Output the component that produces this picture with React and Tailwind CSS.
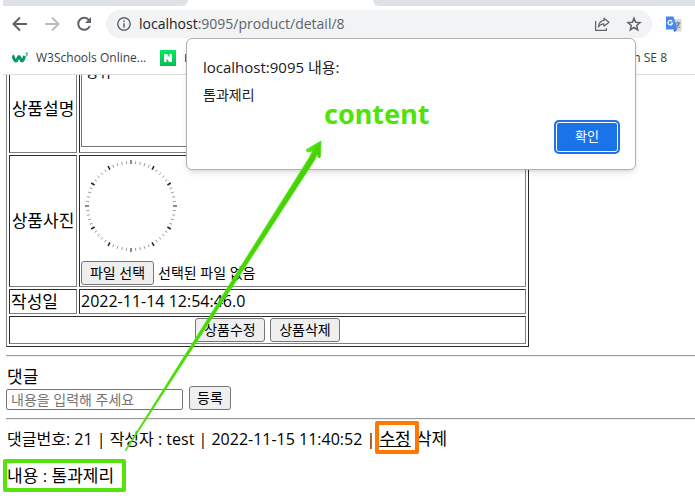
import React, { useState } from "react";

function BackIcon() {
  return (
    <svg width="16" height="16" viewBox="0 0 16 16" fill="none" stroke="currentColor" strokeWidth="2">
      <path d="M15 8H2M8 1.5 1.5 8 8 14.5" />
    </svg>
  );
}

function ForwardIcon() {
  return (
    <svg width="16" height="16" viewBox="0 0 16 16" fill="none" stroke="currentColor" strokeWidth="2">
      <path d="M1 8h13M8 1.5 14.5 8 8 14.5" />
    </svg>
  );
}

function ReloadIcon() {
  return (
    <svg width="16" height="16" viewBox="0 0 16 16" fill="none">
      <path d="M13 4.2A6 6 0 1 0 13.8 10" stroke="currentColor" strokeWidth="2" />
      <path d="M15 1v6H9z" fill="currentColor" />
    </svg>
  );
}

function InfoIcon() {
  return (
    <svg width="14" height="14" viewBox="0 0 14 14" fill="none" stroke="currentColor">
      <circle cx="7" cy="7" r="6.2" strokeWidth="1.4" />
      <path d="M7 6.2v4.2M7 3.5v1.4" strokeWidth="1.5" />
    </svg>
  );
}

function ShareIcon() {
  return (
    <svg width="16" height="16" viewBox="0 0 16 16" fill="none" stroke="currentColor" strokeWidth="1.2">
      <path d="M1.600 5v9.400h10.800V12" />
      <path d="M10 2.200 15 6.200l-5 4V7.800c-2.600 0-4.400 1-5.600 3.200C4.800 7.400 6.600 4.800 10 4.400z" strokeLinejoin="round" />
    </svg>
  );
}

function StarIcon() {
  return (
    <svg width="16" height="16" viewBox="0 0 16 16" fill="none" stroke="currentColor" strokeWidth="1.5">
      <path d="m8 2.200 1.600 4 4.400.4-3.300 2.900 1 4.300L8 11.500l-3.700 2.300 1-4.300L2 6.600l4.400-.4z" />
    </svg>
  );
}

function TranslateIcon() {
  return (
    <svg width="17" height="17" viewBox="0 0 17 17" fill="none">
      <path d="M7 3h9.500v12.500H9z" fill="#dadada" />
      <path d="M10 7h5.500M12.700 5.500V7M14.500 7c-.5 2-2 3.800-3.500 4.800M11.500 8.500c.6 1.400 2 2.700 3.500 3.300" stroke="#6f7f86" strokeWidth="1.200" />
      <path d="M1 .5h7.500l4 13H1z" fill="#4688f1" />
      <path d="M8.500 13.500H12L9.500 16z" fill="#3a45b5" />
      <path d="M7.200 5.300A2.300 2.300 0 1 0 7.600 7H5.500" stroke="#fff" strokeWidth="1.200" />
    </svg>
  );
}

function SchoolsIcon() {
  return (
    <svg width="17" height="12" viewBox="0 0 17 12" fill="none" stroke="#059862">
      <path d="M.5 3.500C1.500 4 2 9 4 9c1.500 0 1.800-4.500 3-4.500S8.500 9 10 9s1.800-3 2.500-5" strokeWidth="3" />
      <path d="M13.500 1h2l-1 1.300c1.500 0 1.300 2-.9 1.500" strokeWidth=".9" />
    </svg>
  );
}

function NaverIcon() {
  return (
    <svg width="16" height="16" viewBox="0 0 16 16">
      <defs>
        <linearGradient id="naver" x1="0" y1="0" x2="0" y2="1">
          <stop offset="0" stopColor="#04e962" />
          <stop offset="1" stopColor="#03bd56" />
        </linearGradient>
      </defs>
      <path d="M0 0h16v16H0z" fill="url(#naver)" />
      <path d="M4 4h3l2.500 3.600V4H12v8H9.200L6.600 8.400V12H4z" fill="#fff" />
    </svg>
  );
}

function RedIcon() {
  return (
    <svg width="16" height="16" viewBox="0 0 16 16">
      <path d="M1 4h14v8H1z" fill="#b5405c" />
    </svg>
  );
}

// 60 ticks, bold one every 5 minutes
function ClockFace() {
  const ticks = Array.from({ length: 60 }, (_, i) => i);
  return (
    <svg width="100" height="100" viewBox="0 0 100 100">
      {ticks.map((i) => {
        const quarter = i % 15 === 0;
        const hour = i % 5 === 0;
        return (
          <path
            key={i}
            d={hour ? "M50 4v4" : "M50 5v3"}
            stroke={quarter ? "#8a8a8a" : hour ? "#222" : "#8c8c8c"}
            strokeWidth={quarter ? 2 : hour ? 1.5 : 0.8}
            transform={`rotate(${i * 6} 50 50)`}
          />
        );
      })}
    </svg>
  );
}

const cell = "border border-t-[#2c2c2c] border-l-[#2c2c2c] border-r-[#808080] border-b-[#808080] px-px";
const button = "h-6 rounded-[3px] border border-[#767676] bg-[#efefef] text-sm leading-5 whitespace-nowrap";

function Browser() {
  return (
    <header className="border-b border-[#dadce0] text-[#5f6368]">
      <div className="flex h-[6px] justify-between bg-white">
        <div className="w-[185px] rounded-br-lg bg-[#dee1e6]" />
        <div className="ml-[185px] flex-1 rounded-bl-lg bg-[#dee1e6]" />
      </div>
      <div className="flex h-9 items-center">
        <nav className="flex w-[103px] shrink-0 gap-4 pl-[9px]">
          <button aria-label="뒤로"><BackIcon /></button>
          <button aria-label="앞으로" className="text-[#babcbe]"><ForwardIcon /></button>
          <button aria-label="새로고침"><ReloadIcon /></button>
        </nav>
        <div className="flex h-7 flex-1 items-center rounded-full bg-[#f1f3f4] pr-[10px] pl-[11px]">
          <InfoIcon />
          <span className="ml-2 flex-1 text-sm">
            <span className="text-[#202124]">localhost</span>:9095/product/detail/8
          </span>
          <button aria-label="공유"><ShareIcon /></button>
          <button aria-label="북마크" className="ml-4"><StarIcon /></button>
        </div>
        <button aria-label="번역" className="mr-[13px] ml-[13px]"><TranslateIcon /></button>
      </div>
      <div className="flex h-8 items-center pl-[9px] text-xs text-[#3c4043]">
        <a href="#w3" className="flex items-center gap-[7px]"><SchoolsIcon />W3Schools Online...</a>
        <a href="#naver" aria-label="네이버" className="ml-[14px]"><NaverIcon /></a>
        <a href="#bookmark" aria-label="북마크" className="ml-2"><RedIcon /></a>
        <a href="#java" className="mr-7 ml-auto">n SE 8</a>
      </div>
    </header>
  );
}

function ProductTable() {
  return (
    <table className="-mt-10 w-[523px] border-separate border-spacing-[2px] border border-t-[#808080] border-l-[#808080] border-r-[#2c2c2c] border-b-[#2c2c2c]">
      <tbody>
        <tr className="h-[115px]">
          <th className={`${cell} w-[68px] pt-[26px] text-[17px] font-normal`}>상품설명</th>
          <td className={`${cell} align-bottom`}>
            <textarea
              aria-label="상품설명"
              defaultValue="행위"
              className="mb-[5px] block h-[90px] w-[180px] resize-none border border-[#767676] px-[3px] pt-1 text-sm"
            />
          </td>
        </tr>
        <tr className="h-[132px]">
          <th className={`${cell} text-[17px] font-normal`}>상품사진</th>
          <td className={`${cell} align-top`}>
            <ClockFace />
            <div className="mt-[5px] flex items-center gap-1 text-sm">
              <input id="photo" type="file" className="hidden" />
              <button className={`${button} w-[73px]`} onClick={() => document.getElementById("photo").click()}>
                파일 선택
              </button>
              <label htmlFor="photo">선택된 파일 없음</label>
            </div>
          </td>
        </tr>
        <tr className="h-[25px]">
          <th className={`${cell} text-left text-[17px] leading-[21px] font-normal`}>작성일</th>
          <td className={`${cell} leading-[21px]`}>2022-11-14 12:54:46.0</td>
        </tr>
        <tr className="h-7">
          <td colSpan={2} className={cell}>
            <div className="flex justify-center gap-[5px]">
              <button className={`${button} w-[70px]`}>상품수정</button>
              <button className={`${button} w-[70px]`}>상품삭제</button>
            </div>
          </td>
        </tr>
      </tbody>
    </table>
  );
}

function Comments() {
  return (
    <section>
      <hr className="mt-2 h-[2px] border-t border-b border-t-[#9a9a9a] border-b-[#eeeeee]" />
      <form className="pt-2" onSubmit={(e) => e.preventDefault()}>
        <label htmlFor="comment" className="block h-[21px] pl-px text-[17px] leading-[23px]">댓글</label>
        <div className="flex items-end gap-[6px]">
          <input
            id="comment"
            placeholder="내용을 입력해 주세요"
            className="h-[21px] w-[177px] rounded-[2px] border border-[#767676] px-1 text-sm placeholder:text-[#757575]"
          />
          <button className={`${button} w-[42px]`}>등록</button>
        </div>
      </form>
      <hr className="mt-2 h-[2px] border-t border-b border-t-[#9a9a9a] border-b-[#eeeeee]" />
      <p className="mt-[7px] h-6 pl-px leading-6 whitespace-nowrap">
        댓글번호: 21 | 작성자 : test | 2022-11-15 11:40:52 |{" "}
        <span className="relative text-[17px]">
          <a href="#edit" className="underline">수정</a>
          <span className="pointer-events-none absolute -top-[6px] -right-2 -bottom-1 -left-1 rounded-xs border-4 border-[#ff7800]" />
        </span>{" "}
        <a href="#delete" className="pl-px text-[17px]">삭제</a>
      </p>
      <p className="mt-2 -ml-[3px] h-[33px] w-[123px] rounded-xs border-4 border-[#54e40c] text-[17px] leading-[25px] whitespace-nowrap">
        내용 : 톰과제리
      </p>
    </section>
  );
}

function Alert({ onClose }) {
  return (
    <div
      role="alertdialog"
      aria-labelledby="alert-title"
      className="absolute top-[38px] left-[186px] flex h-[132px] w-[450px] flex-col rounded-md border border-[#b0b0b0] bg-white pt-4 pr-[15px] pb-[15px] pl-4 shadow-md"
    >
      <h1 id="alert-title" className="text-[15px] leading-6 text-[#202124]">localhost:9095 내용:</h1>
      <p className="mt-1 text-sm leading-6 text-[#202124]">톰과제리</p>
      <button
        onClick={onClose}
        className="mt-auto flex h-[34px] w-[66px] items-center justify-center self-end rounded-[5px] border-2 border-[#1a73e8] bg-[#1a73e8] text-[13px] text-white ring-1 ring-white ring-inset"
      >
        확인
      </button>
    </div>
  );
}

function Annotation() {
  return (
    <div className="pointer-events-none absolute top-0 left-0">
      <svg width="440" height="460" viewBox="0 0 440 460">
        <defs>
          <linearGradient id="arrow" gradientUnits="userSpaceOnUse" x1="216" y1="294" x2="224" y2="299">
            <stop offset="0" stopColor="#58f00c" />
            <stop offset="1" stopColor="#45d206" />
          </linearGradient>
        </defs>
        <path
          d="M125 450.500 309 158 312.500 151 308.500 152Q306 152 306.500 149.500L321 141 320.500 156.500Q319.500 159 318 157.500L317.500 154 314 161 126 450.500z"
          fill="url(#arrow)"
          stroke="#4fe30a"
          strokeWidth=".8"
          strokeLinejoin="round"
        />
      </svg>
      <span className="absolute top-24 left-[324px] font-['Noto_Sans'] text-[27px] leading-9 font-bold text-[#4fe30a]">content</span>
    </div>
  );
}

export default function App() {
  const [open, setOpen] = useState(true);

  return (
    <div className="relative min-h-screen overflow-hidden bg-white pl-[3px] font-['Open_Sans','Noto_Sans_CJK_KR',sans-serif] text-black">
      <Browser />
      <main className="overflow-hidden pl-[3px]">
        <ProductTable />
        <Comments />
      </main>
      {open && <Alert onClose={() => setOpen(false)} />}
      <Annotation />
    </div>
  );
}
